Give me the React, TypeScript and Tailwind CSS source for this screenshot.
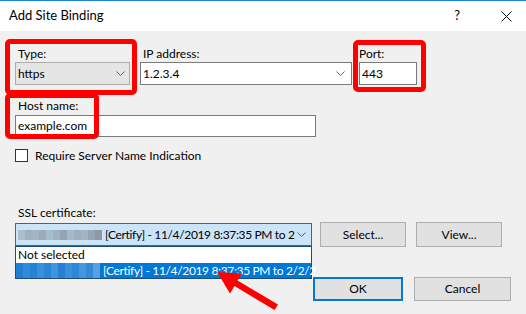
import React from 'react'

const Chevron: React.FC = () => (
  <svg width="9" height="5" viewBox="0 0 9 5" className="shrink-0">
    <path d="M0.5 0.5 L4.5 4.5 L8.5 0.5" fill="none" stroke="#606060" strokeWidth="1" />
  </svg>
)

// pixelated blur that hides the certificate name
const Blur: React.FC<{ colors: string[]; h: string }> = ({ colors, h }) => (
  <div className={`flex ${h} shrink-0`}>
    {colors.map((c, i) => (
      <div key={i} className="w-[7px] h-full" style={{ background: c }} />
    ))}
  </div>
)

const topBlur = ['#a9bfd0', '#9fb0bf', '#a4b6c6', '#9dabb8', '#a8bccc', '#a0b2c2', '#97a4b0', '#a6b9c9', '#9eafbf', '#a3b5c4', '#98a6b3', '#8e99a4']
const selBlur = ['#1f7ed6', '#3189d8', '#2682d5', '#3a8edb', '#2a85d6', '#4093dc', '#2480d5', '#3b8fda', '#2d86d7', '#4596dd', '#3189d8', '#5aa0de']

export default function App() {
  return (
    <div
      className="relative w-[526px] h-[314px] overflow-hidden bg-[#f0f0f0] text-[12px] text-black"
      style={{ fontFamily: 'Lato, "Noto Sans", sans-serif' }}
    >
      {/* title bar */}
      <div className="h-[31px] bg-white border-t border-[#1883d7] flex items-center pl-[9px] pr-[14px]">
        <span className="text-[13px]">Add Site Binding</span>
        <span className="ml-auto mr-[41px] text-[13px]">?</span>
        <svg width="11" height="11" viewBox="0 0 11 11">
          <path d="M0.5 0.5 L10.5 10.5 M10.5 0.5 L0.5 10.5" stroke="#111" strokeWidth="1" />
        </svg>
      </div>

      <div className="pl-[15px] pr-[15px]">
        {/* type / ip / port */}
        <div className="flex pt-[15px]">
          <div className="w-[115px]">
            <div className="pl-[3px] leading-[15px] h-[16px]">Type:</div>
            <div className="h-[23px] bg-[#e5e5e5] border border-[#acacac] flex items-center pl-[2px] pr-[4px]">
              <span className="flex-1">https</span>
              <Chevron />
            </div>
          </div>
          <div className="w-[212px] ml-[10px]">
            <div className="pl-[3px] leading-[15px] h-[16px]">IP address:</div>
            <div className="h-[23px] bg-white border border-[#7a7a7a] flex items-center pl-[2px] pr-[6px]">
              <span className="flex-1">1.2.3.4</span>
              <Chevron />
            </div>
          </div>
          <div className="w-[58px] ml-[7px]">
            <div className="leading-[15px] h-[16px]">Port:</div>
            <div className="h-[23px] bg-white border border-[#7a7a7a] flex items-center pl-[2px]">443</div>
          </div>
        </div>

        {/* host name */}
        <div className="pt-[13px]">
          <div className="pl-[3px] leading-[15px] h-[17px]">Host name:</div>
          <div className="w-[301px] h-[22px] bg-white border border-[#7a7a7a] flex items-center pl-[2px]">example.com</div>
        </div>

        {/* SNI */}
        <div className="flex items-center gap-[7px] pt-[11px]">
          <div className="w-[13px] h-[13px] bg-white border border-[#333]" />
          <span className="leading-[15px]">Require Server Name Indication</span>
        </div>

        {/* ssl */}
        <div className="pl-[3px] leading-[15px] pt-[42px]">SSL certificate:</div>
        <div className="flex items-center pt-[2px]">
          <div className="relative w-[297px] h-[23px] bg-[#cce4f7] border border-[#0078d7] flex items-center pl-[2px] pr-[5px] whitespace-nowrap">
            <Blur colors={topBlur} h="h-[10px]" />
            <span className="ml-[3px] flex-1 tracking-[-0.35px]">[Certify] - 11/4/2019 8:37:35 PM to 2</span>
            <Chevron />
            {/* open dropdown list */}
            <div className="absolute left-[-1px] top-[22px] w-[297px] border border-[#1a4f7a] bg-white">
              <div className="h-[16px] leading-[16px] pl-[2px]">Not selected</div>
              <div className="h-[15px] bg-[#0078d7] text-white flex items-center whitespace-nowrap">
                <Blur colors={selBlur} h="h-[15px]" />
                <span className="ml-[3px] tracking-[-0.35px]">[Certify] - 11/4/2019 8:37:35 PM to 2/2/2</span>
              </div>
            </div>
          </div>
          <button className="ml-[8px] w-[86px] h-[25px] bg-[#e1e1e1] border border-[#adadad]">Select...</button>
          <button className="ml-[10px] w-[86px] h-[25px] bg-[#e1e1e1] border border-[#adadad]">View...</button>
        </div>

        {/* ok / cancel */}
        <div className="flex justify-start pl-[298px] pt-[30px]">
          <button className="w-[90px] h-[24px] bg-[#e1e1e1] border-2 border-[#0078d7]">OK</button>
          <button className="ml-[11px] w-[97px] h-[24px] bg-[#e1e1e1] border border-[#adadad]">Cancel</button>
        </div>
      </div>

      {/* red annotation boxes */}
      <div className="absolute left-[5px] top-[39px] w-[132px] h-[56px] border-[5px] border-[#f00] rounded-[5px]" />
      <div className="absolute left-[353px] top-[40px] w-[73px] h-[52px] border-[5px] border-[#f00] rounded-[5px]" />
      <div className="absolute left-[5px] top-[93px] w-[94px] h-[46px] border-[5px] border-[#f00] rounded-[5px]" />

      {/* red arrow */}
      <svg className="absolute left-[209px] top-[254px]" width="80" height="60" viewBox="0 0 80 60">
        <polygon
          points="8,18 33,19.5 28.5,26.5 69,50.5 65.5,56 25.5,32 21,39.5"
          fill="#f00"
        />
      </svg>
    </div>
  )
}
